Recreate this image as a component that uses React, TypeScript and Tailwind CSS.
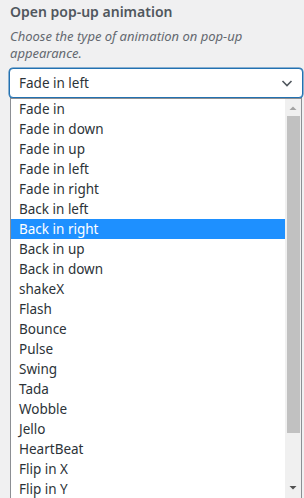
import React from 'react';

const options = [
  'Fade in',
  'Fade in down',
  'Fade in up',
  'Fade in left',
  'Fade in right',
  'Back in left',
  'Back in right',
  'Back in up',
  'Back in down',
  'shakeX',
  'Flash',
  'Bounce',
  'Pulse',
  'Swing',
  'Tada',
  'Wobble',
  'Jello',
  'HeartBeat',
  'Flip in X',
  'Flip in Y',
  'Flip out X',
];

const App: React.FC = () => {
  const selected = 'Back in right';

  return (
    <div className="w-[304px] h-[498px] overflow-hidden bg-[#f0f0f1] pl-[10px] pt-[2px] font-['Noto_Sans',sans-serif]">
      <h3 className="text-[14px] leading-[20px] font-semibold text-[#50575e]">
        Open pop-up animation
      </h3>
      <p className="mt-[6px] text-[13px] leading-[17px] italic text-[#646970] pr-[10px]">
        Choose the type of animation on pop-up appearance.
      </p>

      {/* select + open list */}
      <div className="relative mt-[6px] w-[293px]">
        <div className="flex items-center justify-between h-[30px] -ml-[1px] border border-[#2271b1] rounded-[4px] bg-white pl-[9px] pr-[8px] shadow-[0_0_0_0.5px_#2271b1]">
          <span className="text-[13.5px] text-[#2c3338]">Fade in left</span>
          <svg width="14" height="14" viewBox="0 0 14 14" fill="none">
            <path d="M2.5 5l4.5 4.5L11.5 5" stroke="#50575e" strokeWidth="1.6" />
          </svg>
        </div>

        <div className="absolute left-0 top-full w-[292px] flex border border-[#8c8f94] border-b-0 bg-white">
          <ul className="flex-1">
            {options.map((o) => (
              <li
                key={o}
                className={`h-[20px] pl-[8px] text-[13.5px] leading-[20px] ${
                  o === selected
                    ? 'bg-[#1e90ff] text-white'
                    : 'text-[#2c3338]'
                }`}
              >
                {o}
              </li>
            ))}
          </ul>
          {/* scrollbar */}
          <div className="w-[16px] bg-[#f0f0f0] flex flex-col items-center">
            <svg width="10" height="17" viewBox="0 0 10 17" className="shrink-0">
              <path d="M1.5 11L5 7.5 8.5 11z" fill="#a3a3a3" />
            </svg>
            <div className="w-[13px] h-[317px] bg-[#c1c1c1]" />
            <div className="h-[47px]" />
            <svg width="10" height="17" viewBox="0 0 10 17" className="shrink-0">
              <path d="M1.5 6L5 9.5 8.5 6z" fill="#505050" />
            </svg>
          </div>
        </div>
      </div>
    </div>
  );
};

export default App;
